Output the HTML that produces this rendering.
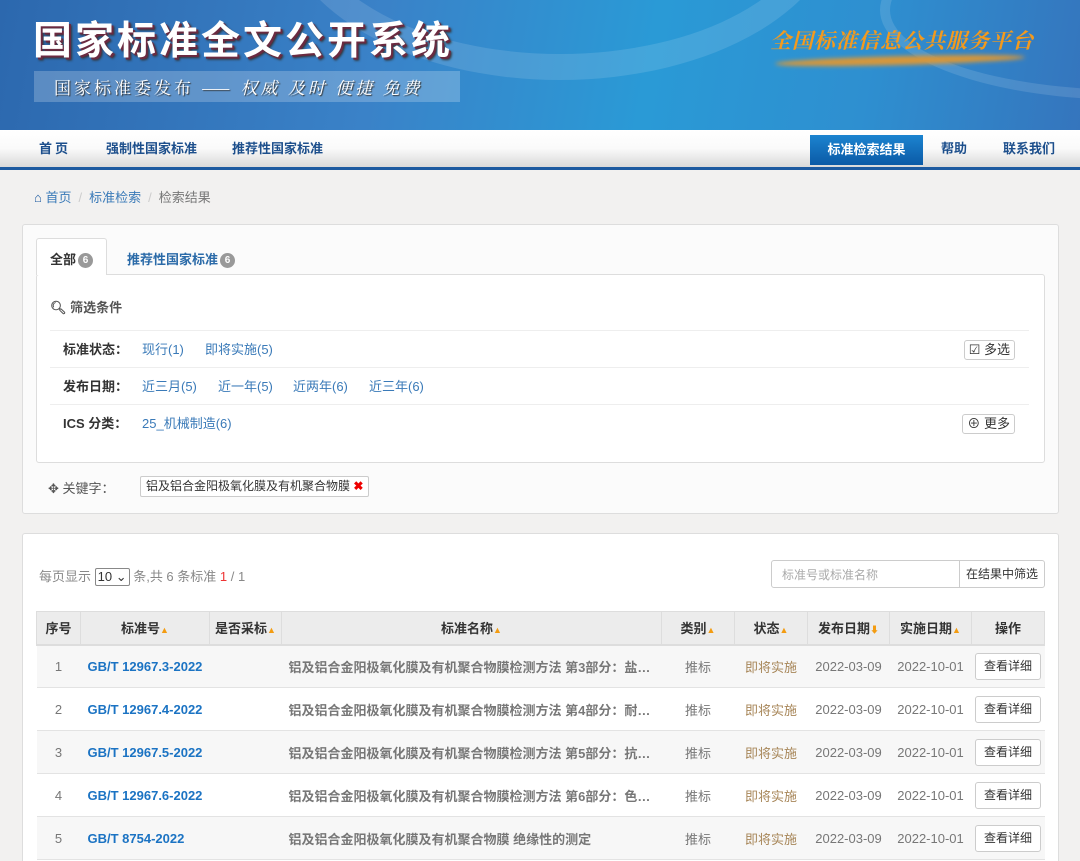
<!DOCTYPE html>
<html style="overflow:hidden;height:861px"><head><meta charset="utf-8"><style>
*{box-sizing:border-box;margin:0;padding:0}
body{width:1080px;height:861px;overflow:hidden;background:#f2f1f0;font-family:"Liberation Sans","Noto Sans CJK SC",sans-serif;font-size:13px;color:#555;position:relative}
.abs{position:absolute}
.hdr{left:0;top:0;width:1080px;height:130px;background:linear-gradient(100deg,#2c68ae 0%,#3a82c8 35%,#2a9ad6 60%,#2e8fd0 80%,#3575bd 100%);overflow:hidden}
.swoosh{border-radius:50%;border:26px solid rgba(255,255,255,.12)}
.title{left:33px;top:10px;font-size:39px;font-weight:bold;color:#fff;letter-spacing:3px;text-shadow:2px 2px 0 #6a2a40,3px 3px 2px #333;font-family:"Noto Sans CJK SC",sans-serif}
.sub{left:34px;top:71px;width:426px;height:31px;background:rgba(255,255,255,.22);color:#fff;font-size:17px;line-height:31px;padding-left:20px;letter-spacing:3px;font-family:"Noto Serif CJK SC",serif;text-shadow:1px 1px 1px #333}
.slog{left:770px;top:25px;color:#f39a1e;font-size:21px;font-weight:bold;font-style:italic;font-family:"Noto Serif CJK SC",serif;letter-spacing:1px}
.bar{left:775px;top:56px;width:250px;height:9px;background:#d7973a;border-radius:50%;filter:blur(2px);transform:rotate(-1.5deg)}
.nav{left:0;top:130px;width:1080px;height:40px;background:linear-gradient(#fff 0%,#fafafa 50%,#d9d9d9 100%);border-bottom:3px solid #1d5aa0}
.nav span{position:absolute;top:0;line-height:37px;font-weight:bold;color:#1d4f8c;font-size:13px}
.nav .act{background:linear-gradient(#1c84d0,#0b5aa6);color:#fff;height:30px;line-height:30px;top:5px;width:113px;text-align:center;left:810px}
.crumb{left:34px;top:187px;font-size:13px;color:#777}
.crumb a{color:#3a7ab8;text-decoration:none}
.crumb i{color:#ccc;font-style:normal;margin:0 7px}
.panel{background:#fbfbfb;border:1px solid #ddd;border-radius:3px}
.box{background:#fff;border:1px solid #ddd;border-radius:3px}
.tab{font-weight:bold;font-size:13px}
.badge{display:inline-block;width:15px;height:15px;border-radius:50%;background:#999;color:#fff;font-size:10px;line-height:15px;text-align:center;margin-left:2px;vertical-align:1px}
.frow{left:50px;width:979px;height:37px;border-top:1px solid #eee;line-height:37px}
.frow b{position:absolute;left:13px;color:#333;font-size:13px}
.frow a{position:absolute;color:#3a7ab8;text-decoration:none}
.btn{position:absolute;right:14px;top:9px;height:20px;border:1px solid #ccc;border-radius:3px;background:#fff;line-height:18px;padding:0 4px;color:#333;font-size:13px}
table{border-collapse:collapse;position:absolute;left:36px;top:611px;width:1008px;table-layout:fixed}
th{height:33px;background:#ececec;border:1px solid #ddd;color:#333;font-size:13px;font-weight:bold;border-bottom:2px solid #ddd}
td{height:43px;text-align:center;color:#777;border-bottom:1px solid #e3e3e3}
tr:nth-child(even) td{background:#f7f7f7}
td.no{color:#1b73c3;font-weight:bold;text-align:left;padding-left:7px}
td.nm{font-weight:bold;text-align:left;padding-left:7px;white-space:nowrap;overflow:hidden}
td.st{color:#a8875a}
.ar{color:#f39c12;font-size:9px}
.vb{display:inline-block;border:1px solid #ccc;border-radius:3px;background:#fff;color:#333;padding:0 8px;height:27px;line-height:25px;font-size:12px}
</style></head><body>
<div class="abs hdr">
<div class="abs swoosh" style="left:280px;top:-250px;width:560px;height:330px"></div>
<div class="abs swoosh" style="left:880px;top:-80px;width:500px;height:180px;border-width:10px"></div>
<div class="abs title">国家标准全文公开系统</div>
<div class="abs sub">国家标准委发布 —— <i>权威 及时 便捷 免费</i></div>
<div class="abs bar"></div>
<div class="abs slog">全国标准信息公共服务平台</div>
</div>
<div class="abs nav">
<span style="left:39px;letter-spacing:3px">首页</span>
<span style="left:106px">强制性国家标准</span>
<span style="left:232px">推荐性国家标准</span>
<span class="act">标准检索结果</span>
<span style="left:941px">帮助</span>
<span style="left:1003px">联系我们</span>
</div>
<div class="abs crumb"><a><span style="color:#1d5aa0">⌂</span> 首页</a><i>/</i><a>标准检索</a><i>/</i>检索结果</div>

<div class="abs panel" style="left:22px;top:224px;width:1037px;height:290px"></div>
<div class="abs" style="left:36px;top:238px;width:71px;height:37px;background:#fff;border:1px solid #ddd;border-bottom:none;border-radius:3px 3px 0 0;z-index:2"></div>
<div class="abs box" style="left:36px;top:274px;width:1009px;height:189px"></div>
<div class="abs tab" style="left:50px;top:249px;color:#333;z-index:3">全部<span class="badge">6</span></div>
<div class="abs tab" style="left:127px;top:249px;color:#2a6aa8">推荐性国家标准<span class="badge">6</span></div>
<div class="abs" style="left:50px;top:297px;color:#555;font-weight:bold">🔍︎ 筛选条件</div>
<div class="abs frow" style="top:330px"><b>标准状态：</b><a style="left:92px">现行(1)</a><a style="left:155px">即将实施(5)</a><span class="btn">☑ 多选</span></div>
<div class="abs frow" style="top:367px"><b>发布日期：</b><a style="left:92px">近三月(5)</a><a style="left:168px">近一年(5)</a><a style="left:243px">近两年(6)</a><a style="left:319px">近三年(6)</a></div>
<div class="abs frow" style="top:404px"><b>ICS 分类：</b><a style="left:92px">25_机械制造(6)</a><span class="btn">⊕ 更多</span></div>
<div class="abs" style="left:48px;top:478px;color:#555">✥ 关键字：</div>
<div class="abs" style="left:140px;top:476px;height:21px;border:1px solid #ccc;border-radius:2px;background:#fff;padding:0 5px;line-height:19px;font-size:12px;color:#333;white-space:nowrap">铝及铝合金阳极氧化膜及有机聚合物膜 <span style="color:#e00;font-weight:bold">✖</span></div>

<div class="abs panel" style="left:22px;top:533px;width:1037px;height:340px;background:#fff"></div>
<div class="abs" style="left:39px;top:566px;color:#888">每页显示 <span style="display:inline-block;border:1px solid #888;border-radius:2px;padding:0 2px;color:#333;height:18px;line-height:16px">10 ⌄</span> 条,共 6 条标准 <span style="color:#e33">1</span> / 1</div>
<div class="abs" style="left:771px;top:560px;width:274px;height:28px;border:1px solid #ccc;border-radius:3px;background:#fff">
<span class="abs" style="left:10px;top:5px;color:#aaa;font-size:12px;white-space:nowrap">标准号或标准名称</span>
<span class="abs" style="left:187px;top:0;height:26px;border-left:1px solid #ccc;padding:0 6px;line-height:26px;color:#333;font-size:12px;white-space:nowrap">在结果中筛选</span></div>

<table>
<colgroup><col style="width:44px"><col style="width:129px"><col style="width:72px"><col style="width:380px"><col style="width:73px"><col style="width:73px"><col style="width:82px"><col style="width:82px"><col style="width:73px"></colgroup>
<tr><th>序号</th><th>标准号<span class="ar">▲</span></th><th>是否采标<span class="ar">▲</span></th><th>标准名称<span class="ar">▲</span></th><th>类别<span class="ar">▲</span></th><th>状态<span class="ar">▲</span></th><th>发布日期<span class="ar">⬇</span></th><th>实施日期<span class="ar">▲</span></th><th>操作</th></tr>
<tr><td>1</td><td class="no">GB/T 12967.3-2022</td><td></td><td class="nm">铝及铝合金阳极氧化膜及有机聚合物膜检测方法 第3部分：盐…</td><td>推标</td><td class="st">即将实施</td><td>2022-03-09</td><td>2022-10-01</td><td><span class="vb">查看详细</span></td></tr>
<tr><td>2</td><td class="no">GB/T 12967.4-2022</td><td></td><td class="nm">铝及铝合金阳极氧化膜及有机聚合物膜检测方法 第4部分：耐…</td><td>推标</td><td class="st">即将实施</td><td>2022-03-09</td><td>2022-10-01</td><td><span class="vb">查看详细</span></td></tr>
<tr><td>3</td><td class="no">GB/T 12967.5-2022</td><td></td><td class="nm">铝及铝合金阳极氧化膜及有机聚合物膜检测方法 第5部分：抗…</td><td>推标</td><td class="st">即将实施</td><td>2022-03-09</td><td>2022-10-01</td><td><span class="vb">查看详细</span></td></tr>
<tr><td>4</td><td class="no">GB/T 12967.6-2022</td><td></td><td class="nm">铝及铝合金阳极氧化膜及有机聚合物膜检测方法 第6部分：色…</td><td>推标</td><td class="st">即将实施</td><td>2022-03-09</td><td>2022-10-01</td><td><span class="vb">查看详细</span></td></tr>
<tr><td>5</td><td class="no">GB/T 8754-2022</td><td></td><td class="nm">铝及铝合金阳极氧化膜及有机聚合物膜 绝缘性的测定</td><td>推标</td><td class="st">即将实施</td><td>2022-03-09</td><td>2022-10-01</td><td><span class="vb">查看详细</span></td></tr>
</table>
</body></html>
